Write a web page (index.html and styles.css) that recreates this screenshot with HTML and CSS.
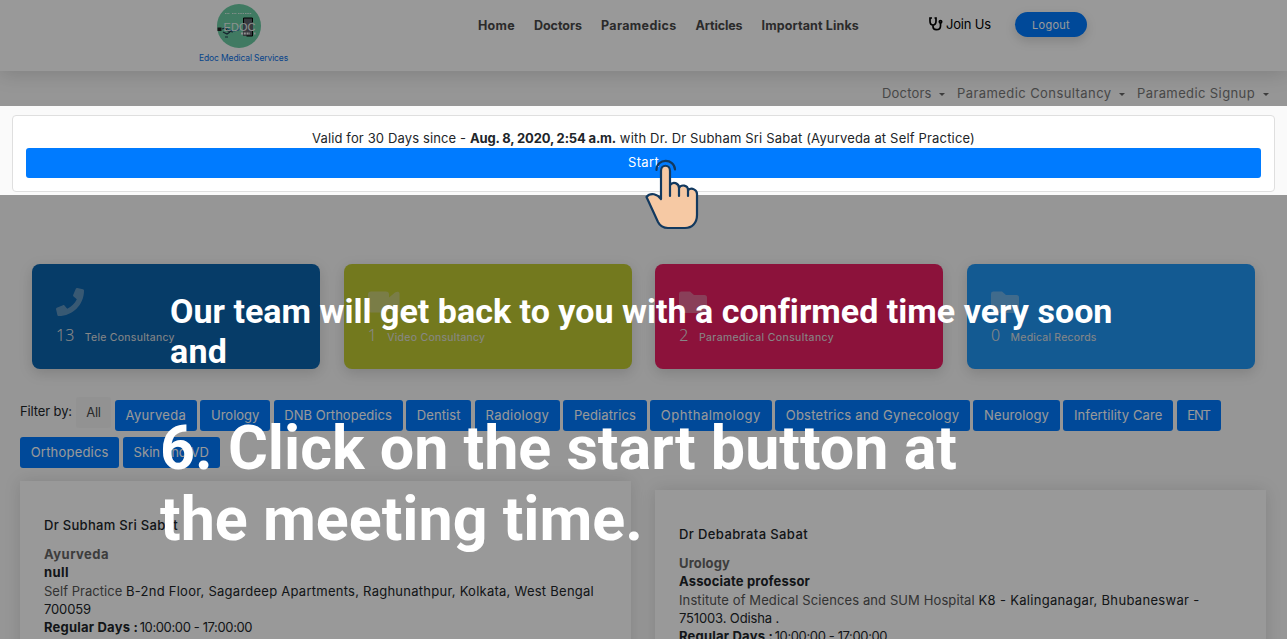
FILE: index.html
```html
<!DOCTYPE html>
<html lang="en">
<head>
<meta charset="utf-8">
<title>Edoc Medical Services</title>
<link rel="stylesheet" href="styles.css">
</head>
<body>
<header class="header">
  <div class="brand">
    <svg class="logo" width="46" height="46" viewBox="0 0 46 46">
      <circle cx="23" cy="23" r="22" fill="#6bcba3"/>
      <path d="M9 10.500h5M16 10.500h5M22 10.500h6M29 10.500h7" stroke="#d8eee5" stroke-width="1.200" stroke-dasharray="1.500 .8"/>
      <path d="M27 15h10v18H27z" fill="#5c6068"/>
      <path d="M27.500 21v-6h9v4M36.500 28v5h-6" fill="none" stroke="#000"/>
      <path d="M1.500 24.500h4v3.500h-4z" fill="#222"/>
      <path d="M6 26l3-1 3 3 5 1M7 29l4 2 3-2M9 34h3" fill="none" stroke="#24384d" stroke-width="1.200"/>
      <path d="M9 23l4 4 5 1 5-1v-3" fill="none" stroke="#2872b8"/>
      <text class="logo-name" x="7.500" y="27.500" textLength="32" lengthAdjust="spacing">EDOC</text>
      <path d="M25 30.500h9M38 30.500h1.500" stroke="#eee" stroke-width="2" stroke-dasharray="2 .8"/>
    </svg>
    <span class="brand-name" data-w="89">Edoc Medical Services</span>
  </div>
  <nav class="nav">
    <a data-w="37">Home</a><a data-w="48">Doctors</a><a data-w="75.500">Paramedics</a><a data-w="47">Articles</a><a data-w="97.500">Important Links</a>
  </nav>
  <div class="account">
    <svg width="14" height="14" viewBox="0 0 14 14" fill="none" stroke="#000" stroke-width="1.700"><path d="M3 1H1v3c0 2.500 1 4 3 4s3-1.500 3-4V1H5.500M4 8v1.500c0 2 1 3.200 3.300 3.200 2.500 0 4.200-1.500 4.200-3.700V6"/><circle cx="11.500" cy="4.800" r="1.200"/></svg>
    <span class="join" data-w="45">Join Us</span>
    <a class="logout"><span data-w="38">Logout</span></a>
  </div>
</header>
<nav class="subnav">
  <a><span data-w="49.500">Doctors</span><i class="caret"></i></a>
  <a><span data-w="154.500">Paramedic Consultancy</span><i class="caret"></i></a>
  <a><span data-w="118">Paramedic Signup</span><i class="caret"></i></a>
</nav>
<section class="notice">
  <p class="notice-text"><span data-w="158">Valid for 30 Days since - </span><b data-w="146">Aug. 8, 2020, 2:54 a.m.</b><span data-w="359"> with Dr. Dr Subham Sri Sabat (Ayurveda at Self Practice)</span></p>
  <a class="start"><span data-w="31">Start</span></a>
</section>
<section class="stats">
  <div class="stat stat-tele">
    <svg class="stat-icon" width="28" height="28" viewBox="0 0 512 512"><path d="M493 25L389 1c-11-3-23 3-27 14l-48 112c-4 10-1 21 7 28l60 50c-36 76-98 139-176 176l-50-60c-7-8-18-11-28-7L15 362c-11 5-17 16-14 27l24 104c3 11 12 19 24 19 256 0 463-207 463-463 0-12-8-22-19-24z"/></svg>
    <div class="stat-line"><span class="stat-num">13</span><span data-w="90">Tele Consultancy</span></div>
  </div>
  <div class="stat stat-video">
    <svg class="stat-icon" width="32" height="28" viewBox="0 0 32 28"><path d="M3 3.500h15a3 3 0 0 1 3 3v3l6-5c2-1.500 4.500-1 4.500 1v17c0 2-2.500 2.500-4.500 1l-6-5v3a3 3 0 0 1-3 3H3a3 3 0 0 1-3-3v-15a3 3 0 0 1 3-3z"/></svg>
    <div class="stat-line"><span class="stat-num">1</span><span data-w="98">Video Consultancy</span></div>
  </div>
  <div class="stat stat-para">
    <svg class="stat-icon" width="28" height="28" viewBox="0 0 28 28"><path d="M2.600 3.500H11L15 7h10.500A2.500 2.500 0 0 1 28 9.500v13a2.500 2.500 0 0 1-2.500 2.500h-23A2.500 2.500 0 0 1 0 22.500V6a2.500 2.500 0 0 1 2.600-2.500z"/></svg>
    <div class="stat-line"><span class="stat-num">2</span><span data-w="135">Paramedical Consultancy</span></div>
  </div>
  <div class="stat stat-records">
    <svg class="stat-icon" width="28" height="28" viewBox="0 0 28 28"><path d="M2.600 3.500H11L15 7h10.500A2.500 2.500 0 0 1 28 9.500v13a2.500 2.500 0 0 1-2.500 2.500h-23A2.500 2.500 0 0 1 0 22.500V6a2.500 2.500 0 0 1 2.600-2.500z"/></svg>
    <div class="stat-line"><span class="stat-num">0</span><span data-w="86">Medical Records</span></div>
  </div>
</section>
<section class="filters">
  <div class="filter-row">
    <span class="filter-label" data-w="52">Filter by:</span>
    <a class="chip chip-all"><span data-w="14.500">All</span></a>
    <a class="chip"><span data-w="60.500">Ayurveda</span></a>
    <a class="chip"><span data-w="48.500">Urology</span></a>
    <a class="chip"><span data-w="107.500">DNB Orthopedics</span></a>
    <a class="chip"><span data-w="44">Dentist</span></a>
    <a class="chip"><span data-w="63.500">Radiology</span></a>
    <a class="chip"><span data-w="62">Pediatrics</span></a>
    <a class="chip"><span data-w="100">Ophthalmology</span></a>
    <a class="chip"><span data-w="173.500">Obstetrics and Gynecology</span></a>
    <a class="chip"><span data-w="65">Neurology</span></a>
    <a class="chip"><span data-w="88.500">Infertility Care</span></a>
    <a class="chip"><span data-w="22.500">ENT</span></a>
  </div>
  <div class="filter-row">
    <a class="chip"><span data-w="78">Orthopedics</span></a>
    <a class="chip"><span data-w="75.500">Skin and VD</span></a>
  </div>
</section>
<section class="doctors">
  <article class="doctor">
    <h2><span data-w="134">Dr Subham Sri Sabat</span></h2>
    <p class="field"><span data-w="65">Ayurveda</span></p>
    <p class="rank"><span data-w="25">null</span></p>
    <p><span class="muted" data-w="82">Self Practice </span><span data-w="468">B-2nd Floor, Sagardeep Apartments, Raghunathpur, Kolkata, West Bengal</span></p>
    <p><span data-w="47">700059</span></p>
    <p><b data-w="94">Regular Days :</b> <span class="hours" data-w="112.500">10:00:00 - 17:00:00</span></p>
  </article>
  <article class="doctor doctor-low">
    <h2><span data-w="129">Dr Debabrata Sabat</span></h2>
    <p class="field"><span data-w="51">Urology</span></p>
    <p class="rank"><span data-w="131">Associate professor</span></p>
    <p><span class="muted" data-w="299.500">Institute of Medical Sciences and SUM Hospital </span><span data-w="221">K8 - Kalinganagar, Bhubaneswar -</span></p>
    <p><span data-w="100">751003. Odisha .</span></p>
    <p><b data-w="94">Regular Days :</b> <span class="hours" data-w="112.500">10:00:00 - 17:00:00</span></p>
  </article>
</section>
<div class="spotlight"></div>
<svg class="pointer" width="54" height="72" viewBox="0 0 54 72" fill="none" stroke="#12395f" stroke-width="2.200" stroke-linecap="round" stroke-linejoin="round">
  <path d="M11.500 11c0-12 18-12 18.500-.5"/>
  <path fill="#f6c9a4" d="M16 40V12c0-7 9-7 9 0v14c3-4 9-2 9 3 2-4 9-3 9 2 4-3 9 0 9 4v21c0 8-5 13-12 13H23c-5 0-8-2-10-6L1.500 38c4-5 11-3 14.500 2z"/>
  <path d="M25 26v11M34 29v8M43 31v6"/>
</svg>
<div class="caption"><span data-w="942">Our team will get back to you with a confirmed time very soon</span><br><span data-w="57">and</span></div>
<div class="headline"><span data-w="797">6. Click on the start button at</span><br><span data-w="483">the meeting time.</span></div>
<script src="fit.js"></script>
</body>
</html>
```
FILE: styles.css
```css
* { box-sizing: border-box; }
html { overflow: hidden; }
body {
  margin: 0;
  height: 639px;
  overflow: hidden;
  position: relative;
  background: #fafafa;
  color: #212529;
  font: 13px/19px Inter, "Open Sans", sans-serif;
}
p, h2 { margin: 0; }
span, b, a { white-space: pre; }
.header {
  height: 71px;
  display: flex;
  background: #fff;
  box-shadow: 0 2px 20px rgba(0, 0, 0, .16);
}
.brand { width: 89px; margin-left: 199px; padding-top: 3px; display: flex; flex-direction: column; align-items: center; }
.logo { flex: none; margin-left: -10px; }
.logo-name { font: 11px "Liberation Sans", sans-serif; fill: #e9f3ef; }
.brand-name { font-size: 8.5px; line-height: 18px; color: #0b72e8; align-self: flex-start; }
.nav { display: flex; gap: 19px; margin-left: 190px; padding-top: 16px; font-weight: 700; font-size: 12.5px; color: #484848; }
.account { display: flex; align-items: flex-start; margin-left: 70px; padding-top: 12px; color: #000; }
.account svg { margin: 5px 3px 0 0; flex: none; }
.join { padding-top: 3px; }
.logout {
  width: 72px; height: 25px; margin-left: 24px;
  border-radius: 13px; text-align: center; line-height: 26px; font-size: 11px;
  color: #fff; background: #007bff;
  box-shadow: 0 4px 11px rgba(0, 0, 0, .15);
}
.subnav { height: 44px; display: flex; justify-content: flex-end; gap: 12px; padding: 13px 18.5px 0 0; color: #777; }
.subnav a { display: flex; align-items: flex-start; }
.caret { margin: 9px 0 0 7.500px; border: 3px solid transparent; border-top-color: #666; border-bottom: 0; }
.notice { height: 77px; margin: 0 12px; padding: 13px 13px 13px; background: #fff; border: 1px solid #dfdfdf; border-radius: 4px; text-align: center; }
.notice-text { height: 19px; line-height: 19px; }
.start { display: block; height: 30px; border-radius: 3px; background: #007bff; color: #fff; line-height: 28px; }
.stats { display: flex; justify-content: space-between; margin: 72px 32px 0; }
.stat { width: 288px; height: 105px; padding: 24px; border-radius: 8px; color: #fff; font-size: 10.5px; box-shadow: 0 4px 14px rgba(0, 0, 0, .15); }
.stat-tele { background: #0a64ae; }
.stat-video { background: #c0ca33; }
.stat-para { background: #e91e63; }
.stat-records { background: #2196f3; }
.stat-icon { display: block; fill: #ddd; opacity: .4; }
.stat-line { display: flex; align-items: baseline; gap: 10.5px; height: 30px; padding-top: 7px; color: #e2e2e2; }
.stat-num { font: 300 16px/24px "Noto Sans", sans-serif; }
.filters { padding: 28px 20px 0; }
.filter-row { display: flex; gap: 3.5px; height: 37px; align-items: flex-start; }
.filter-label { padding-top: 5px; }
.chip { padding: 0 10.7px; height: 31px; margin-top: 3px; line-height: 31px; border-radius: 3px; background: #007bff; color: #fff; flex: none; }
.chip-all { margin-top: 0; background: #f4f4f4; color: #484848; }
.doctors { display: flex; gap: 24px; padding: 10px 20px 0; align-items: flex-start; }
.doctor { width: 611px; flex: none; height: 230px; padding: 34px 24px 0; background: #fff; box-shadow: 0 0 16px rgba(0, 0, 0, .12); line-height: 18.3px; }
.doctor-low { margin-top: 9px; }
.doctor h2 { font-size: 13px; font-weight: 500; line-height: 20px; margin-bottom: 10px; }
.doctor .field { color: #666; font-weight: 700; }
.doctor .rank { font-weight: 700; }
.doctor .muted { color: #555; }
.hours { margin-left: -2px; }
.spotlight { position: absolute; left: 0; right: 0; top: 106px; height: 89px; box-shadow: 0 0 0 1300px rgba(0, 0, 0, .4); }
.pointer { position: absolute; left: 645px; top: 159px; }
.caption { position: absolute; left: 170px; top: 291px; color: #fff; font: 700 34px/40px Roboto, sans-serif; }
.headline { position: absolute; left: 160px; top: 413px; color: #fff; font: 700 61px/71px Roboto, sans-serif; }
```
FILE: fit.js
```js
// Tracks each label so that it fills its intended measure.
document.querySelectorAll('[data-w]').forEach(function (el) {
  var range = document.createRange();
  range.selectNodeContents(el);
  var count = el.textContent.length;
  var extra = Number(el.dataset.w) - range.getBoundingClientRect().width;
  el.style.letterSpacing = (extra / count) + 'px';
});
```
